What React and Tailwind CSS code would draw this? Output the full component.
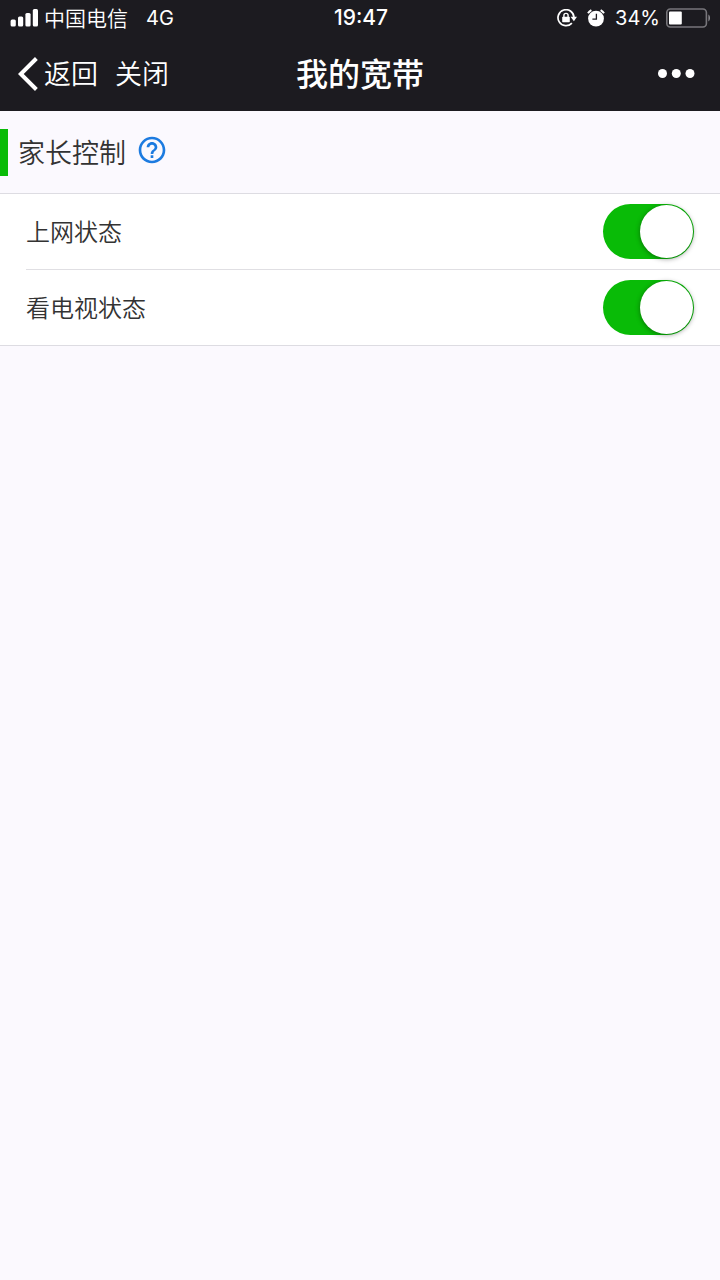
import { useState } from "react";
import { MdHelpOutline } from "react-icons/md";

const SWITCHES = [
  { id: "internet", label: "上网状态" },
  { id: "tv", label: "看电视状态" },
];

function SignalIcon() {
  return (
    <svg width="28" height="18" viewBox="0 0 28 18" fill="currentColor">
      <rect x="0.6" y="10.6" width="5.2" height="7" rx="1.5" />
      <rect x="8" y="7.4" width="5.2" height="10.2" rx="1.5" />
      <rect x="15.4" y="4" width="5.2" height="13.6" rx="1.5" />
      <rect x="22.8" y="0" width="5.2" height="17.6" rx="1.5" />
    </svg>
  );
}

function RotationLockIcon() {
  return (
    <svg width="20" height="18" viewBox="0 0 20 18" fill="none">
      <path
        d="M14.9 14.1A8 8 0 1 1 17 8.6"
        stroke="currentColor"
        strokeWidth="1.7"
      />
      <path d="M13.6 7.8h6.4l-3.1 4.4z" fill="currentColor" />
      <rect x="5.2" y="7.8" width="7.6" height="5.4" rx="0.7" fill="currentColor" />
      <path
        d="M6.9 8.2V6.5a2.1 2.1 0 0 1 4.2 0v1.7"
        stroke="currentColor"
        strokeWidth="1.4"
      />
    </svg>
  );
}

function AlarmIcon() {
  return (
    <svg width="18" height="18" viewBox="0 0 18 18" fill="none">
      <circle cx="9" cy="9.6" r="7.9" fill="currentColor" />
      <path d="M9.4 4.8v5.4H5.4" stroke="#1c1b20" strokeWidth="1.3" />
      <path
        d="M1 4.3A9.5 9.5 0 0 1 4.4 1.1M13.6 1.1a9.5 9.5 0 0 1 3.4 3.2"
        stroke="currentColor"
        strokeWidth="2"
      />
    </svg>
  );
}

function BatteryIcon() {
  return (
    <svg width="46" height="20" viewBox="0 0 46 20" fill="none">
      <rect
        x="0.8"
        y="1"
        width="39.6"
        height="18"
        rx="3.5"
        stroke="#77767b"
        strokeWidth="1.6"
      />
      <rect x="3" y="3.6" width="12.8" height="12.8" rx="1" fill="white" />
      <path d="M42.4 6.6c1.9.8 2.4 5.6 0 6.8z" fill="#8a898e" />
    </svg>
  );
}

function StatusBar() {
  return (
    <div className="grid h-9 grid-cols-[1fr_auto_1fr] items-center pl-2.5 pr-2 text-xl">
      <div className="flex items-center">
        <SignalIcon />
        <span className="ml-1.5 text-[21px] font-[350]">中国电信</span>
        <span className="ml-[18px] font-['Inter']">4G</span>
      </div>
      <span className="font-['Inter'] text-[21px] font-medium">19:47</span>
      <div className="flex items-center justify-end">
        <RotationLockIcon />
        <span className="ml-2.5">
          <AlarmIcon />
        </span>
        <span className="ml-2.5 mr-1.5 font-['Inter']">34%</span>
        <BatteryIcon />
      </div>
    </div>
  );
}

function NavBar() {
  return (
    <div className="grid h-[75px] grid-cols-[1fr_auto_1fr] items-center px-[18px]">
      <div className="flex items-center text-[27px] font-[350]">
        <button className="flex items-center gap-1.5">
          <svg width="20" height="34" viewBox="0 0 20 34" fill="none">
            <path
              d="M18.4 1.5L2.8 17l15.6 15.5"
              stroke="currentColor"
              strokeWidth="4"
            />
          </svg>
          返回
        </button>
        <button className="ml-[17px]">关闭</button>
      </div>
      <h1 className="pb-1 text-[32px] font-medium">我的宽带</h1>
      <button aria-label="更多" className="mr-1.5 justify-self-end">
        <svg width="38" height="10" viewBox="0 0 38 10" fill="currentColor">
          <circle cx="4.5" cy="4.5" r="4.5" />
          <circle cx="18.3" cy="4.5" r="4.5" />
          <circle cx="32" cy="4.5" r="4.5" />
        </svg>
      </button>
    </div>
  );
}

function SwitchRow({ id, label }) {
  const [on, setOn] = useState(true);

  return (
    <div className="flex h-[76px] items-center justify-between border-b border-[#e0dfe3] pr-[26px] last:h-[75px] last:border-b-0">
      <label htmlFor={id} className="pb-0.5 text-2xl font-[350]">
        {label}
      </label>
      <input
        id={id}
        type="checkbox"
        role="switch"
        checked={on}
        onChange={(e) => setOn(e.target.checked)}
        className="flex h-[55px] w-[91px] appearance-none items-center rounded-full bg-[#dfdfdf] p-px before:size-[53px] before:rounded-full before:bg-white before:shadow-[0_1px_5px_rgba(0,0,0,0.4)] checked:justify-end checked:bg-[#09bb07]"
      />
    </div>
  );
}

export default function App() {
  return (
    <div className="min-h-screen bg-[#fbf9fe] font-['Noto_Sans_CJK_SC',sans-serif] text-[#333333]">
      <header className="bg-[#1c1b20] text-white">
        <StatusBar />
        <NavBar />
      </header>

      <main>
        <div className="flex h-[82px] items-center">
          <span className="h-[47px] w-2 bg-[#09bb07]" />
          <h2 className="ml-2.5 text-[27px] font-[350]">家长控制</h2>
          <button aria-label="帮助" className="ml-2.5 pb-1 text-[#1c7be0]">
            <MdHelpOutline size={32} />
          </button>
        </div>

        <div className="border-y border-[#dddce2] bg-white pl-[26px]">
          {SWITCHES.map((s) => (
            <SwitchRow key={s.id} id={s.id} label={s.label} />
          ))}
        </div>
      </main>
    </div>
  );
}
